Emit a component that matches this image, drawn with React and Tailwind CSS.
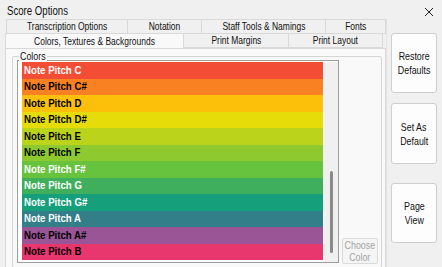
import React from 'react';

const rows = [
  { name: 'Note Pitch C', bg: 'bg-[#f44d36]', fg: 'text-white' },
  { name: 'Note Pitch C#', bg: 'bg-[#f98121]', fg: 'text-black' },
  { name: 'Note Pitch D', bg: 'bg-[#fcc00b]', fg: 'text-black' },
  { name: 'Note Pitch D#', bg: 'bg-[#e6dc0a]', fg: 'text-black' },
  { name: 'Note Pitch E', bg: 'bg-[#bcd31b]', fg: 'text-black' },
  { name: 'Note Pitch F', bg: 'bg-[#8dc92f]', fg: 'text-black' },
  { name: 'Note Pitch F#', bg: 'bg-[#67c23e]', fg: 'text-white' },
  { name: 'Note Pitch G', bg: 'bg-[#3fae5d]', fg: 'text-white' },
  { name: 'Note Pitch G#', bg: 'bg-[#169f7b]', fg: 'text-white' },
  { name: 'Note Pitch A', bg: 'bg-[#337f89]', fg: 'text-white' },
  { name: 'Note Pitch A#', bg: 'bg-[#9a5596]', fg: 'text-black' },
  { name: 'Note Pitch B', bg: 'bg-[#e8376f]', fg: 'text-black' },
];

// the dialog font is narrower than anything installed, so squeeze it a little
const Txt = ({ children, className = '' }) => (
  <span className={`inline-block whitespace-nowrap scale-x-[0.77] ${className}`}>{children}</span>
);

const Tab = ({ label, width, active }) => (
  <div
    className={`${width} flex items-center justify-center border border-[#d9d9d9] -ml-px first:ml-0 ${
      active ? 'bg-[#f9f9f9] border-b-0 relative z-10' : 'bg-[#f0f0f0]'
    }`}
  >
    <Txt>{label}</Txt>
  </div>
);

const SideButton = ({ lines, className }) => (
  <div
    className={`w-[46px] h-[60px] flex flex-col items-center justify-center rounded-[3px] border border-[#cfcfcf] bg-[#fdfdfd] leading-[14px] text-[11.5px] ${className}`}
  >
    {lines.map((l) => (
      <Txt key={l}>{l}</Txt>
    ))}
  </div>
);

export default function App() {
  return (
    <div className="w-[442px] h-[267px] overflow-hidden bg-[#f0f0f0] text-[#111] text-[11px] font-['Liberation_Sans',Arial,sans-serif] flex flex-col">
      {/* Title bar */}
      <div className="h-[19px] flex items-center justify-between pl-[7px] pr-[7px] pt-[4px]">
        <Txt className="text-[12.5px] origin-left">Score Options</Txt>
        <svg width="10" height="10" viewBox="0 0 10 10" className="mr-[1px]">
          <path d="M1 1 L9 9 M9 1 L1 9" stroke="#222" strokeWidth="1" />
        </svg>
      </div>

      <div className="flex flex-1">
        {/* Tabs + page */}
        <div className="ml-[5px] w-[381px] flex flex-col">
          <div className="flex h-[15px] ml-[1px] leading-none">
            <Tab label="Transcription Options" width="w-[122px]" />
            <Tab label="Notation" width="w-[75px]" />
            <Tab label="Staff Tools & Namings" width="w-[125px]" />
            <Tab label="Fonts" width="w-[61px]" />
          </div>
          <div className="flex h-[15px] -mt-px leading-none">
            <Tab label="Colors, Textures & Backgrounds" width="w-[179px]" active />
            <Tab label="Print Margins" width="w-[106px]" />
            <Tab label="Print Layout" width="w-[95px]" />
          </div>

          <div className="flex-1 bg-[#f9f9f9] border border-[#d9d9d9] pl-[6px] pr-[3px] pt-[7px]">
            <div className="relative h-[212px] border border-[#d5d5d5] rounded-[2px] pl-[4px] pt-[3px] flex items-start">
              <span className="absolute -top-[7px] left-[6px] px-[1px] bg-[#f9f9f9] leading-[12px]">
                <Txt className="origin-left -mr-[7px] text-[11.5px]">Colors</Txt>
              </span>

              {/* List box */}
              <div className="w-[322px] h-[203px] border border-[#9d9d9d] bg-white pl-[4px] pt-[1px] flex">
                <div className="w-[302px] h-[198px] grid grid-rows-12">
                  {rows.map((r) => (
                    <div
                      key={r.name}
                      className={`${r.bg} ${r.fg} flex items-center pl-[2px] font-bold text-[11.5px] leading-none`}
                    >
                      <Txt className="origin-left scale-x-[0.84]">{r.name}</Txt>
                    </div>
                  ))}
                </div>
                <div className="w-[14px] h-[200px] bg-[#f0f0f0] ml-px flex justify-center pt-[109px]">
                  <div className="w-[3px] h-[82px] rounded-full bg-[#8a8a8a]" />
                </div>
              </div>

              <div className="self-end mb-[3px] ml-[3px] w-[36px] h-[26px] flex flex-col items-center justify-center rounded-[2px] border border-[#dadada] bg-[#f5f5f5] text-[#a3a3a3] text-[11.5px] leading-[12px]">
                <Txt>Choose</Txt>
                <Txt>Color</Txt>
              </div>
            </div>
          </div>
        </div>

        {/* Right buttons */}
        <div className="flex-1 border-l border-[#e3e3e3] pl-[4px] pt-[14px] flex flex-col">
          <SideButton lines={['Restore', 'Defaults']} />
          <SideButton lines={['Set As', 'Default']} className="mt-[10px] h-[61px]" />
          <SideButton lines={['Page', 'View']} className="mt-[19px]" />
        </div>
      </div>
    </div>
  );
}
